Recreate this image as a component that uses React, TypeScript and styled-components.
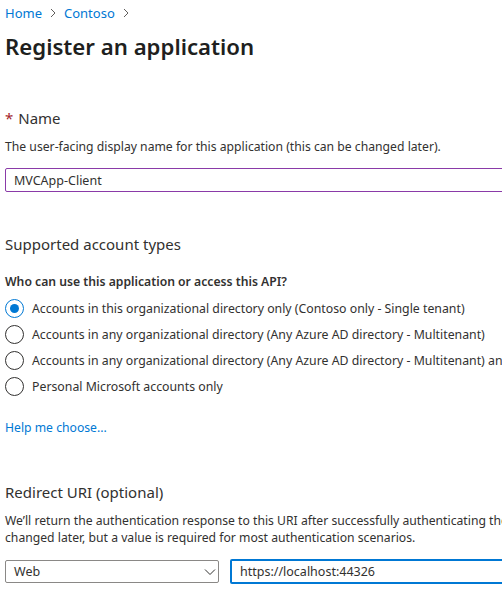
import React, { useState } from "react";
import styled, { createGlobalStyle } from "styled-components";

const GlobalStyle = createGlobalStyle`
  html, body {
    margin: 0;
    padding: 0;
    background: #ffffff;
    overflow: hidden;
  }
  body {
    font-family: "Noto Sans", "Open Sans", sans-serif;
    color: #323130;
    -webkit-font-smoothing: antialiased;
  }
`;

const Page = styled.div`
  width: 820px;
  padding: 0 0 0 5px;
  display: flex;
  flex-direction: column;
`;

const Breadcrumb = styled.nav`
  display: flex;
  align-items: center;
  gap: 6px;
  height: 26px;
  font-size: 13px;
`;

const Crumb = styled.a`
  color: #0078d4;
  text-decoration: none;
`;

const Chevron = styled.svg`
  width: 10px;
  height: 10px;
  stroke: #605e5c;
  fill: none;
  stroke-width: 1;
`;

const Title = styled.h1`
  margin: 6px 0 0;
  font-size: 22.2px;
  font-weight: 600;
  line-height: 30px;
  color: #201f1e;
`;

const Section = styled.section<{ $top: number }>`
  display: flex;
  flex-direction: column;
  margin-top: ${(p) => p.$top}px;
`;

const Heading = styled.h2`
  margin: 0;
  font-size: 15px;
  font-weight: 400;
  line-height: 22px;
  color: #323130;
`;

const Required = styled.span`
  color: #a4262c;
  margin-right: 5px;
`;

const Hint = styled.p`
  margin: 9px 0 0;
  font-size: 12.2px;
  line-height: 17px;
`;

const Question = styled.p`
  margin: 18px 0 0;
  font-size: 12.2px;
  font-weight: 600;
  line-height: 17px;
`;

const TextBox = styled.input<{ $focused?: boolean }>`
  box-sizing: border-box;
  height: ${(p) => (p.$focused ? 25 : 24)}px;
  flex: 1;
  padding: 0 8px;
  font: inherit;
  font-size: 12.5px;
  color: #323130;
  outline: none;
  background: #fff;
  border: ${(p) => (p.$focused ? "2px solid #0078d4" : "1px solid #8a3aa8")};
  border-radius: 2px;
`;

const NameRow = styled.div`
  display: flex;
  margin-top: 13px;
`;

const RadioList = styled.div`
  display: flex;
  flex-direction: column;
  margin-top: 5px;
`;

const RadioRow = styled.label`
  display: flex;
  align-items: center;
  gap: 8px;
  height: 26px;
  font-size: 12.3px;
  white-space: nowrap;
  cursor: pointer;
`;

const RadioCircle = styled.span<{ $checked: boolean }>`
  box-sizing: border-box;
  width: 19px;
  height: 19px;
  border-radius: 50%;
  border: 1px solid ${(p) => (p.$checked ? "#0078d4" : "#323130")};
  display: flex;
  align-items: center;
  justify-content: center;
  flex-shrink: 0;

  &::after {
    content: "";
    width: 9px;
    height: 9px;
    border-radius: 50%;
    background: ${(p) => (p.$checked ? "#0078d4" : "transparent")};
  }
`;

const HelpLink = styled.a`
  margin-top: 20px;
  font-size: 12.2px;
  line-height: 17px;
  color: #0078d4;
  text-decoration: none;
`;

const UriRow = styled.div`
  display: flex;
  align-items: center;
  gap: 11px;
  margin-top: 13px;
`;

const Select = styled.div`
  box-sizing: border-box;
  width: 214px;
  height: 23px;
  display: flex;
  align-items: center;
  justify-content: space-between;
  padding: 0 2px 0 8px;
  border: 1px solid #8a8886;
  border-radius: 2px;
  font-size: 12.5px;
`;

const Caret = styled.svg`
  width: 12px;
  height: 8px;
  fill: none;
  stroke: #323130;
  stroke-width: 1;
`;

const accountTypes = [
  "Accounts in this organizational directory only (Contoso only - Single tenant)",
  "Accounts in any organizational directory (Any Azure AD directory - Multitenant)",
  "Accounts in any organizational directory (Any Azure AD directory - Multitenant) and personal Microsoft accounts (e.g. Skype, Xbox)",
  "Personal Microsoft accounts only",
];

export default function App() {
  const [selected, setSelected] = useState(0);

  return (
    <>
      <GlobalStyle />
      <Page>
        <Breadcrumb>
          <Crumb>Home</Crumb>
          <Chevron viewBox="0 0 10 10">
            <path d="M3 1l4 4-4 4" />
          </Chevron>
          <Crumb>Contoso</Crumb>
          <Chevron viewBox="0 0 10 10">
            <path d="M3 1l4 4-4 4" />
          </Chevron>
        </Breadcrumb>
        <Title>Register an application</Title>

        <Section $top={45}>
          <Heading>
            <Required>*</Required>Name
          </Heading>
          <Hint>The user-facing display name for this application (this can be changed later).</Hint>
          <NameRow>
            <TextBox defaultValue="MVCApp-Client" />
          </NameRow>
        </Section>

        <Section $top={41}>
          <Heading>Supported account types</Heading>
          <Question>Who can use this application or access this API?</Question>
          <RadioList>
            {accountTypes.map((label, i) => (
              <RadioRow key={i} onClick={() => setSelected(i)}>
                <RadioCircle $checked={selected === i} />
                {label}
              </RadioRow>
            ))}
          </RadioList>
          <HelpLink>Help me choose...</HelpLink>
        </Section>

        <Section $top={45}>
          <Heading>Redirect URI (optional)</Heading>
          <Hint>
            We’ll return the authentication response to this URI after successfully authenticating the user. Providing
            this now is optional and it can be changed later, but a value is required for most authentication scenarios.
          </Hint>
          <UriRow>
            <Select>
              Web
              <Caret viewBox="0 0 12 8">
                <path d="M1 1.5l5 5 5-5" />
              </Caret>
            </Select>
            <TextBox $focused defaultValue="https://localhost:44326" />
          </UriRow>
        </Section>
      </Page>
    </>
  );
}
